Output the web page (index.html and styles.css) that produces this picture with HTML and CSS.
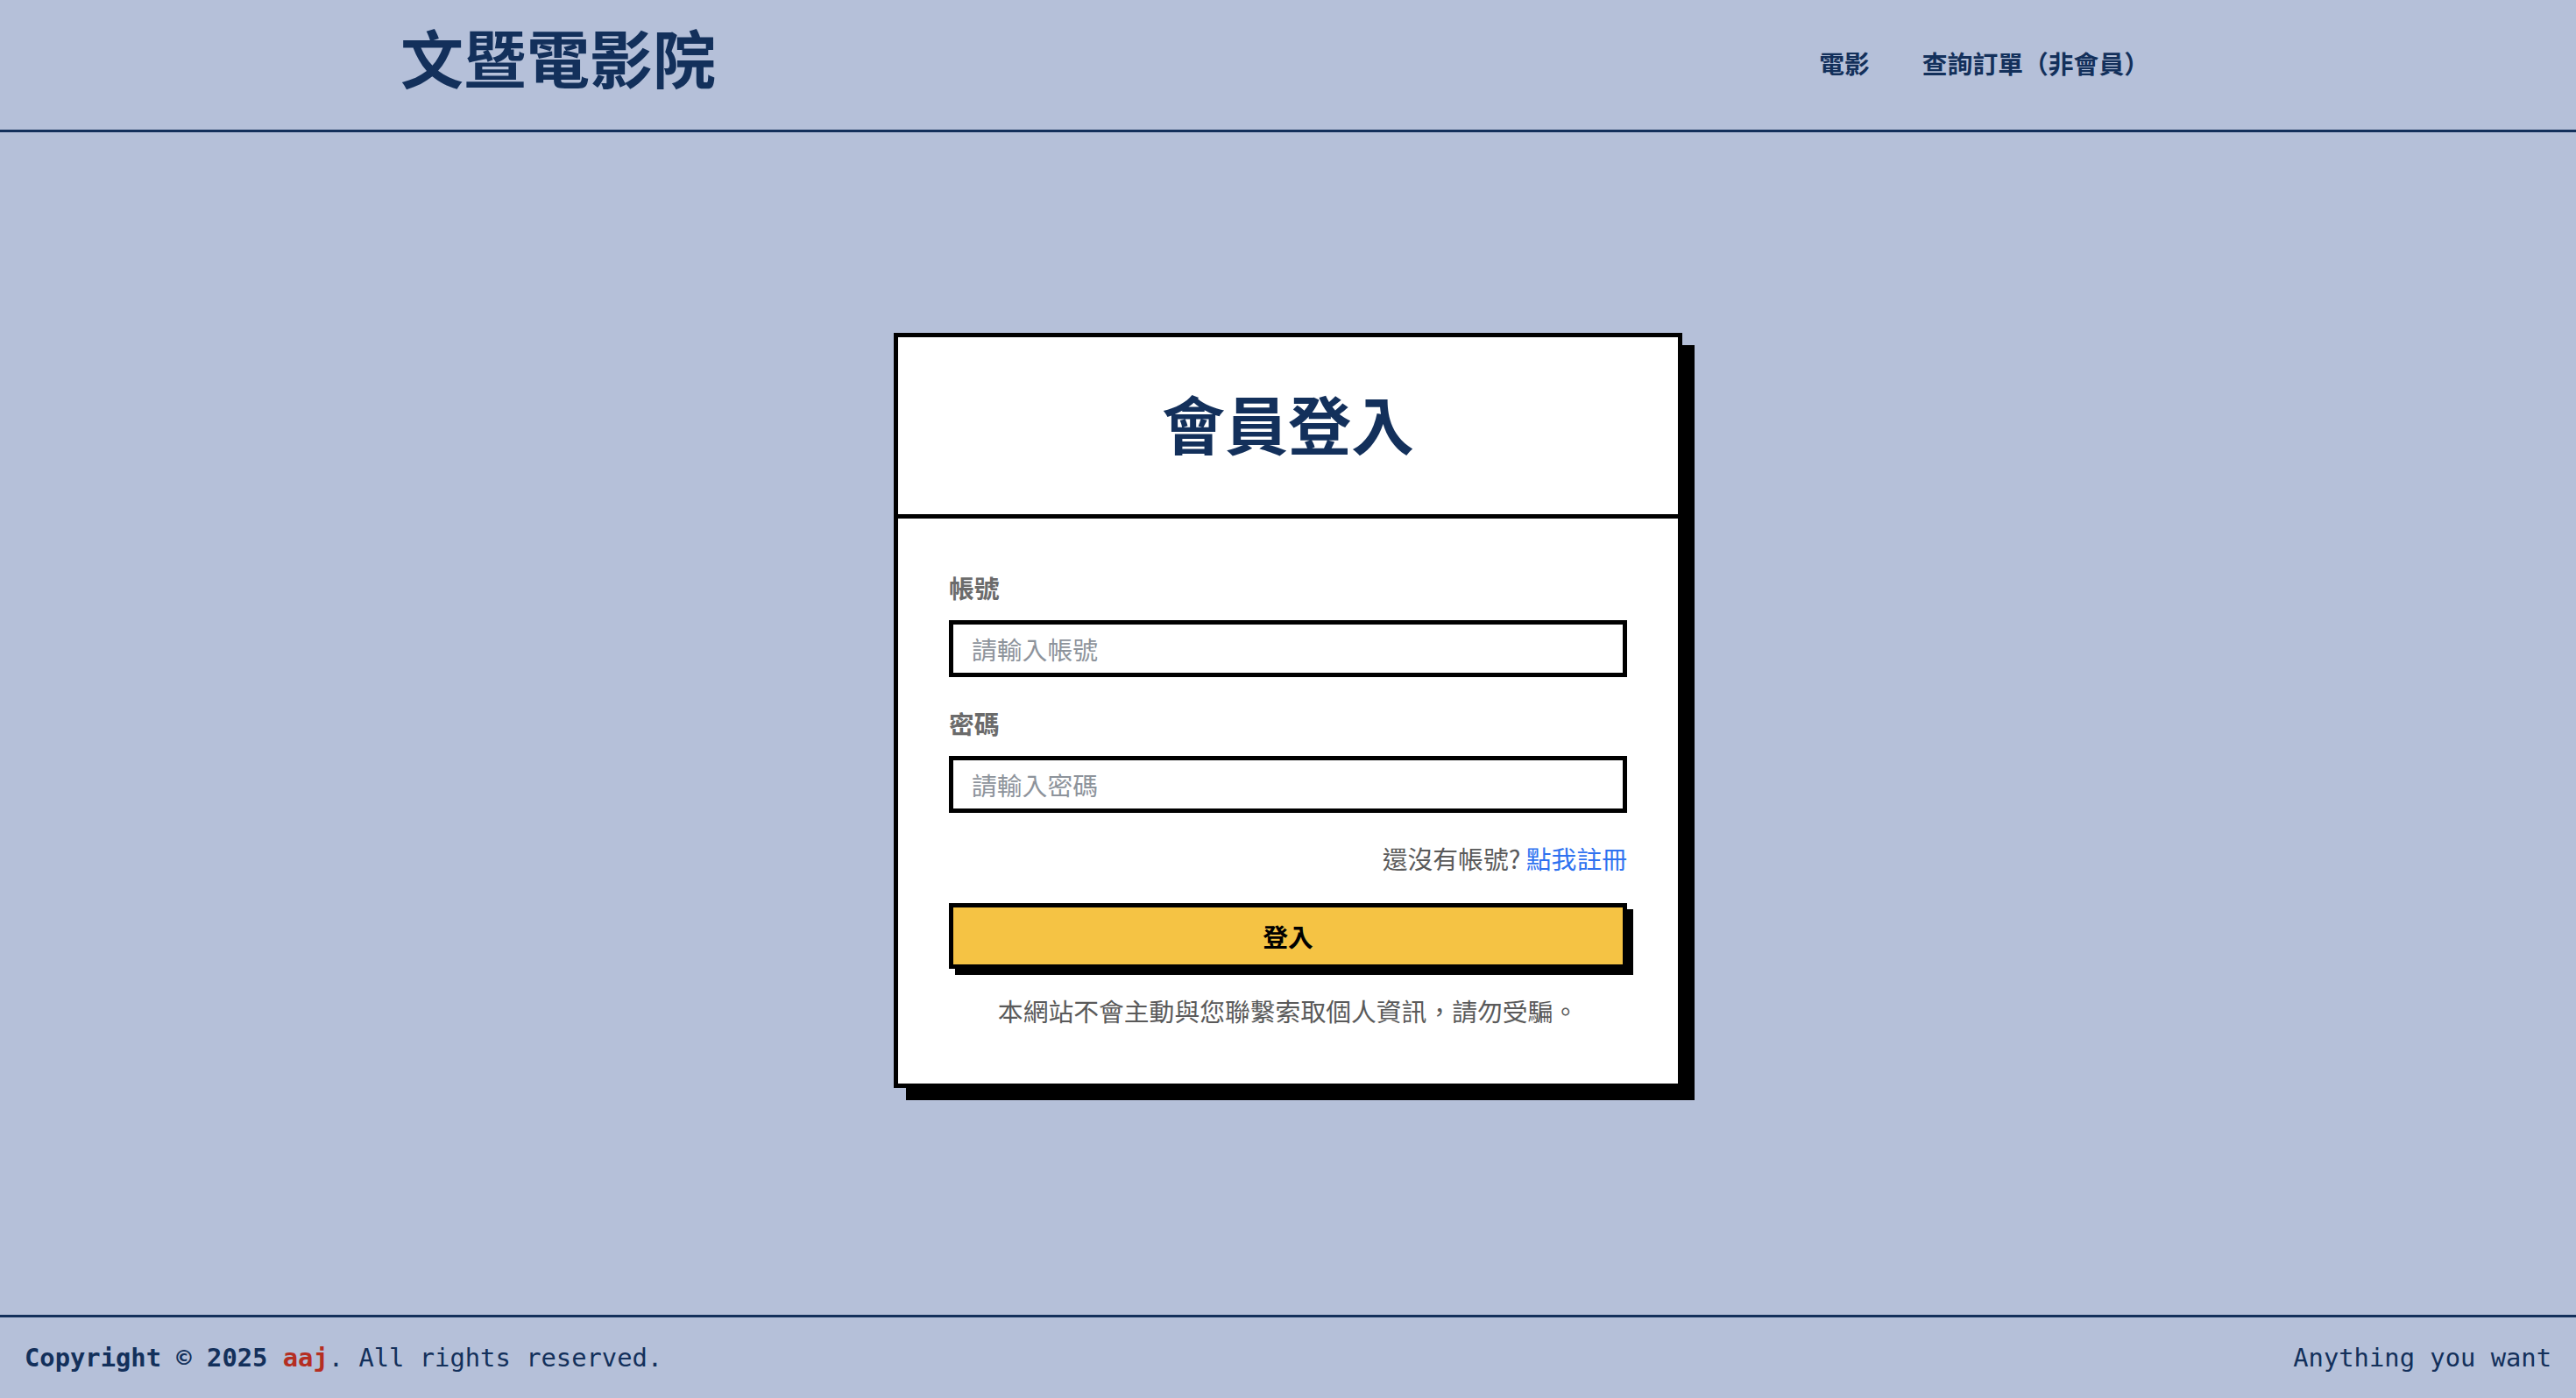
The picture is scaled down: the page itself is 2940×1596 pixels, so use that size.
FILE: index.html
```html
<!DOCTYPE html>
<html lang="zh-Hant">
<head>
<meta charset="utf-8">
<title>會員登入 - 文暨電影院</title>
<link rel="stylesheet" href="styles.css">
</head>
<body>
<header class="site-header">
  <div class="header-inner">
    <a class="brand" href="#">文暨電影院</a>
    <nav class="nav">
      <a class="nav-link" href="#">電影</a>
      <a class="nav-link" href="#">查詢訂單（非會員）</a>
    </nav>
  </div>
</header>
<main class="main">
  <section class="card">
    <div class="card-head">
      <h1 class="card-title">會員登入</h1>
    </div>
    <form class="card-body">
      <div class="field">
        <label class="label" for="acc">帳號</label>
        <input class="input" id="acc" type="text" placeholder="請輸入帳號">
      </div>
      <div class="field">
        <label class="label" for="pwd">密碼</label>
        <input class="input" id="pwd" type="password" placeholder="請輸入密碼">
      </div>
      <p class="register">還沒有帳號? <a class="register-link" href="#">點我註冊</a></p>
      <button class="btn" type="button">登入</button>
      <p class="notice">本網站不會主動與您聯繫索取個人資訊，請勿受騙。</p>
    </form>
  </section>
</main>
<footer class="site-footer">
  <div class="copy"><strong>Copyright © 2025 <span class="author">aaj</span></strong>. All rights reserved.</div>
  <div class="tagline">Anything you want</div>
</footer>
</body>
</html>
```
FILE: styles.css
```css
* { box-sizing: border-box; }
html, body { margin: 0; padding: 0; }
body {
  min-height: 100vh;
  display: flex;
  flex-direction: column;
  background: #b5c0d9;
  color: #13305b;
  font-family: "Noto Sans CJK TC", "Noto Sans", sans-serif;
}
a { text-decoration: none; }

.site-header {
  height: 151px;
  border-bottom: 3px solid #13305b;
}
.header-inner {
  width: 2026px;
  height: 100%;
  margin: 0 auto;
  display: flex;
  align-items: center;
  justify-content: space-between;
}
.brand {
  color: #13305b;
  font-size: 72px;
  font-weight: 700;
  line-height: 1.2;
  margin-top: -20px;
}
.nav { display: flex; align-items: center; margin-top: -4px; }
.nav-link {
  color: #13305b;
  font-size: 28.8px;
  font-weight: 700;
  line-height: 1.5;
  padding: 0 30px;
}

.main {
  flex: 1;
  display: flex;
  align-items: center;
  justify-content: center;
  padding-bottom: 30px;
}
.card {
  width: 900px;
  background: #fff;
  border: 5px solid #000;
  box-shadow: 14px 14px 0 #000;
}
.card-head {
  height: 207px;
  border-bottom: 5px solid #000;
  display: flex;
  align-items: center;
  justify-content: center;
}
.card-title {
  margin: -8px 0 0;
  font-size: 72px;
  font-weight: 700;
  line-height: 1.2;
  color: #13305b;
}
.card-body {
  padding: 58px 58px 62px;
  display: flex;
  flex-direction: column;
}
.field {
  display: flex;
  flex-direction: column;
  margin-bottom: 32px;
}
.field + .field { margin-bottom: 31px; }
.label {
  font-size: 28.8px;
  font-weight: 700;
  line-height: 42px;
  color: #6b6b6b;
  margin-bottom: 16px;
}
.input {
  width: 100%;
  height: 65px;
  border: 5px solid #000;
  border-radius: 0;
  padding: 0 21px;
  font-family: inherit;
  font-size: 28.8px;
  color: #333;
  background: #fff;
  outline: none;
}
.input::placeholder { color: #8d939b; }
.register {
  margin: 0 0 30px;
  text-align: right;
  font-size: 28.8px;
  line-height: 42px;
  color: #5a5a5a;
}
.register-link { color: #2f72f0; }
.btn {
  width: 100%;
  height: 75px;
  border: 5px solid #000;
  background: #f5c344;
  box-shadow: 7px 7px 0 #000;
  font-family: inherit;
  font-size: 28.8px;
  font-weight: 700;
  color: #000;
  cursor: pointer;
  margin-bottom: 27px;
}
.notice {
  margin: 0;
  text-align: center;
  font-size: 28.8px;
  line-height: 42px;
  color: #5a5a5a;
}

.site-footer {
  height: 95px;
  border-top: 3px solid #13305b;
  padding: 0 28px;
  display: flex;
  align-items: center;
  justify-content: space-between;
  font-family: "DejaVu Sans Mono", "Liberation Mono", monospace;
  font-size: 28.8px;
  color: #13305b;
}
.copy strong { font-weight: 700; }
.author { color: #b52e22; }
```
